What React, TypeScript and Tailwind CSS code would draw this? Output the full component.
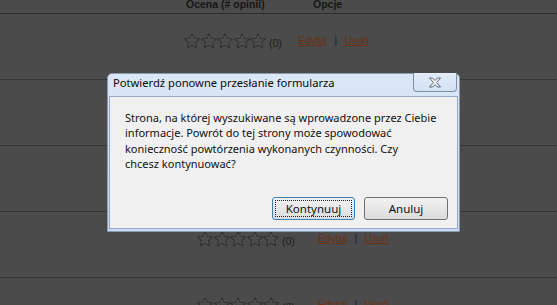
import React from "react";

const Star = () => (
  <svg width="16" height="16" viewBox="0 0 16 16" className="block">
    <path
      d="M8 0.9 L10.1 5.6 L15.2 6.1 L11.3 9.5 L12.5 14.6 L8 12 L3.5 14.6 L4.7 9.5 L0.8 6.1 L5.9 5.6 Z"
      fill="#4a4a4a"
      stroke="#2e2e2e"
      strokeWidth="1.1"
      strokeLinejoin="round"
    />
    <path
      d="M8 2.6 L9.5 6.3 L13.3 6.7 L10.4 9.2 L11.3 13 L8 11 L4.7 13 L5.6 9.2 L2.7 6.7 L6.5 6.3 Z"
      fill="none"
      stroke="#575757"
      strokeWidth="0.7"
      strokeLinejoin="round"
    />
  </svg>
);

const Row = ({ pl, rw }: { pl: string; rw: string }) => (
  <div className={`h-[66px] border-b border-[#363636] flex items-start pt-[19px] ${pl}`}>
    <div className={`flex items-start ${rw}`}>
      <div className="flex gap-[0.5px]">
        <Star />
        <Star />
        <Star />
        <Star />
        <Star />
      </div>
      <span className="ml-[3px] mt-[4px] text-[10.5px] leading-[12px] text-[#1e1e1e]">(0)</span>
    </div>
    <div className="flex items-start text-[10.5px] leading-[13px] mt-[1px]">
      <span className="text-[#6b3014] underline">Edytuj</span>
      <span className="mx-[7px] text-[#25334a] font-bold">|</span>
      <span className="text-[#6b3014] underline">Usuń</span>
    </div>
  </div>
);

export default function App() {
  return (
    <div
      className="relative w-[557px] h-[305px] overflow-hidden bg-[#4b4b4b]"
      style={{ fontFamily: '"Liberation Sans", Arial, sans-serif' }}
    >
      {/* header */}
      <div className="h-[14px] border-b border-[#2e2e2e] flex items-end text-[10.5px] font-bold text-[#161616] leading-[12px]">
        <div className="flex w-full pl-[186px] -mb-[1px] pb-[4px]">
          <span className="w-[127px]">Ocena (# opinii)</span>
          <span>Opcje</span>
        </div>
      </div>
      <Row pl="pl-[184px]" rw="w-[114px]" />
      <Row pl="pl-[184px]" rw="w-[114px]" />
      <Row pl="pl-[184px]" rw="w-[114px]" />
      <Row pl="pl-[197px]" rw="w-[121px]" />
      <Row pl="pl-[197px]" rw="w-[121px]" />

      {/* dialog */}
      <div
        className="absolute left-[107px] top-[73px] w-[353px] h-[159px] rounded-t-[5px] border border-[#8b99ad] bg-gradient-to-b from-[#dbe7f6] to-[#c8daf2] flex flex-col px-[1px] pb-[2px]"
        style={{ fontFamily: '"Noto Sans", "Open Sans", sans-serif' }}
      >
        <div className="h-[22px] flex items-start relative">
          <span className="ml-[4px] mt-[1px] text-[11.2px] leading-[16px] text-[#0a0a0a]">
            Potwierdź ponowne przesłanie formularza
          </span>
          <div className="absolute right-[1px] -top-[1px] w-[44px] h-[19px] rounded-b-[4px] border border-[#7f8ea5] border-t-0 bg-gradient-to-b from-[#e4edf9] to-[#d3e1f3] flex items-center justify-center">
            <svg width="16" height="11" viewBox="0 0 16 11">
              <path
                d="M2.5 1 L5.5 1 L8 3.5 L10.5 1 L13.5 1 L9.5 5.5 L13.5 10 L10.5 10 L8 7.5 L5.5 10 L2.5 10 L6.5 5.5 Z"
                fill="#f6f8fb"
                stroke="#4e5866"
                strokeWidth="0.9"
                strokeLinejoin="round"
              />
            </svg>
          </div>
        </div>
        <div className="flex-1 bg-[#f0f0f0] border border-[#93a9c9] flex flex-col">
          <p className="pl-[15px] pt-[13px] text-[11px] leading-[15.3px] text-[#111]">
            Strona, na której wyszukiwane są wprowadzone przez Ciebie
            <br />
            informacje. Powrót do tej strony może spowodować
            <br />
            konieczność powtórzenia wykonanych czynności. Czy
            <br />
            chcesz kontynuować?
          </p>
          <div className="mt-auto flex justify-end gap-[9px] pr-[9px] pb-[8px]">
            <div className="w-[83px] h-[23px] rounded-[3px] border border-[#3c7fb1] bg-gradient-to-b from-[#f2f2f2] to-[#dcdcdc] p-[2px]">
              <div className="w-full h-full border border-dotted border-[#222] flex items-center justify-center text-[11.5px] text-[#111] leading-none">
                Kontynuuj
              </div>
            </div>
            <div className="w-[84px] h-[23px] rounded-[3px] border border-[#707070] bg-gradient-to-b from-[#f2f2f2] to-[#dcdcdc] flex items-center justify-center text-[11.5px] text-[#111] leading-none">
              Anuluj
            </div>
          </div>
        </div>
      </div>
    </div>
  );
}
